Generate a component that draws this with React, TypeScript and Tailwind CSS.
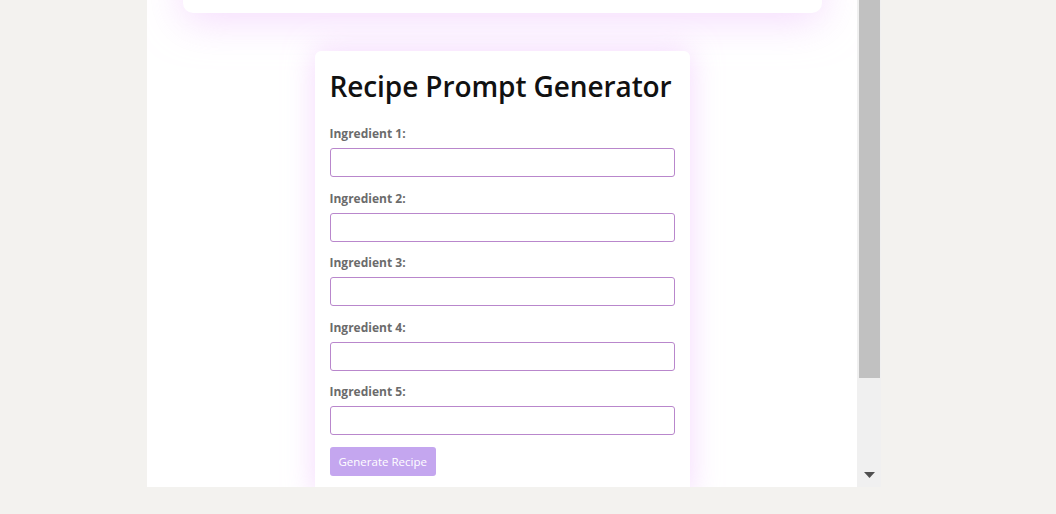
import React from 'react';

const ingredients = [1, 2, 3, 4, 5];

function IngredientField({ n }: { n: number }) {
    return (
        <div className="flex flex-col">
            <label
                htmlFor={`ingredient-${n}`}
                className="text-[12px] font-bold text-[#6b6b6b] leading-[16px] mb-[6px]"
            >
                Ingredient {n}:
            </label>
            <input
                id={`ingredient-${n}`}
                type="text"
                className="h-[29px] w-full rounded-[3px] border border-[#b987cc] bg-white px-2 outline-none"
            />
        </div>
    );
}

export default function App() {
    return (
        <div
            className="relative h-[514px] w-full overflow-hidden bg-[#f3f2ef]"
            style={{ fontFamily: '"Open Sans", "Noto Sans", sans-serif' }}
        >
            <div className="ml-[147px] flex h-[487px] w-[735px]">
                {/* page viewport */}
                <div className="flex h-full w-[710px] flex-col items-center overflow-hidden bg-white">
                    <div className="-mt-[40px] h-[53px] w-[639px] shrink-0 rounded-[10px] bg-white shadow-[0_8px_40px_rgba(236,190,252,0.55)]" />
                    <div className="mt-[38px] w-[375px] shrink-0 rounded-t-[6px] bg-white px-[15px] pt-[16px] pb-[20px] shadow-[0_0_30px_rgba(236,190,252,0.6)]">
                        <h1 className="whitespace-nowrap text-[28px] font-semibold leading-[38px] tracking-[-0.1px] text-[#111]">
                            Recipe Prompt Generator
                        </h1>
                        <form className="mt-[21px] flex flex-col gap-[13.5px]">
                            {ingredients.map((n) => (
                                <IngredientField key={n} n={n} />
                            ))}
                            <div className="-mt-[1.5px]">
                                <button
                                    type="button"
                                    className="h-[29px] rounded-[3px] bg-[#c4a6ef] px-[9px] text-[11.5px] text-white"
                                >
                                    Generate Recipe
                                </button>
                            </div>
                        </form>
                    </div>
                </div>
                {/* scrollbar */}
                <div className="flex h-full w-[24px] flex-col bg-[#f0f0f0] pl-[2px]">
                    <div className="h-[378px] w-[21px] bg-[#c1c1c1]" />
                    <div className="flex-1" />
                    <div className="flex h-[24px] w-[21px] items-start justify-center pt-[9px]">
                        <svg width="11" height="6" viewBox="0 0 11 6">
                            <path d="M0 0h11L5.5 6z" fill="#505050" />
                        </svg>
                    </div>
                </div>
            </div>
        </div>
    );
}
